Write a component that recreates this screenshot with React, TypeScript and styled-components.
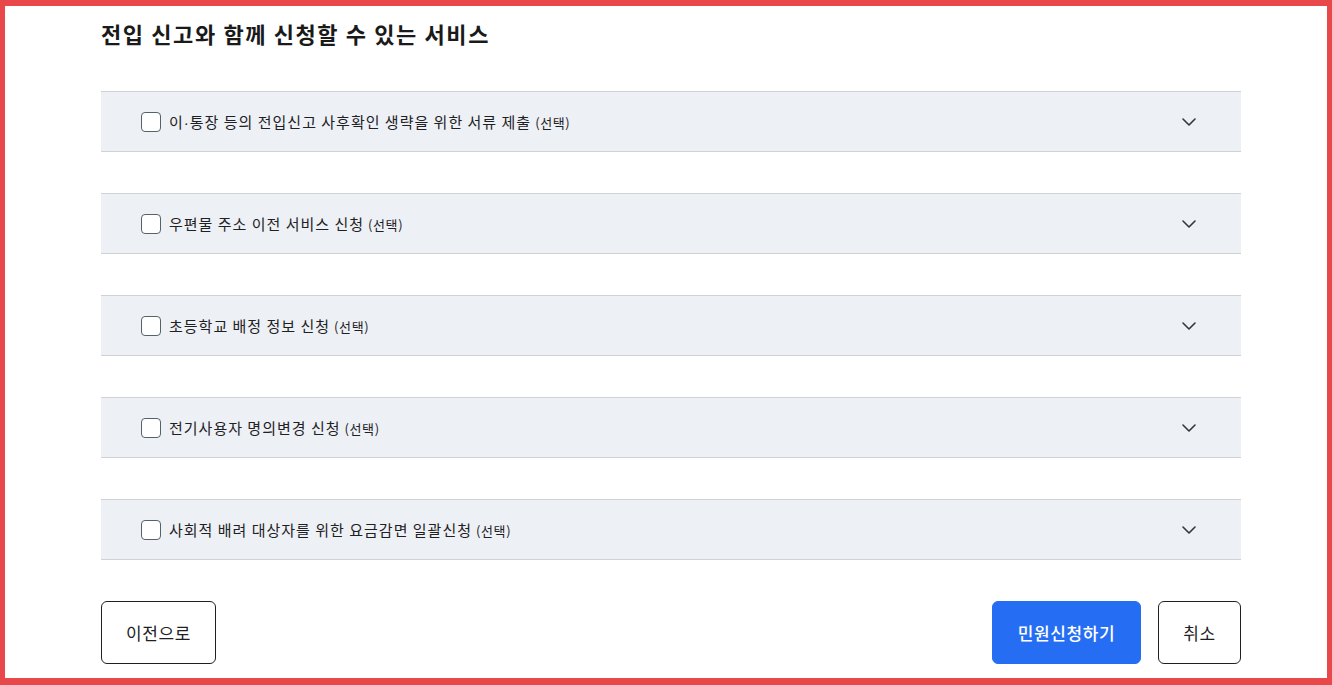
import React, { useState } from "react";
import styled, { createGlobalStyle } from "styled-components";

const GlobalStyle = createGlobalStyle`
  html, body {
    margin: 0;
    padding: 0;
    background: #ffffff;
  }
  body {
    font-family: "Noto Sans CJK KR", "Noto Sans", sans-serif;
    color: #1e2124;
  }
  * {
    box-sizing: border-box;
  }
`;

const Frame = styled.div`
  width: 1332px;
  height: 685px;
  border-style: solid;
  border-color: #e8484a;
  border-width: 6px 5px 7px 5px;
  padding: 11px 86px 14px 96px;
  display: flex;
  flex-direction: column;
  overflow: hidden;
`;

const Title = styled.h2`
  margin: 0 0 42px;
  font-size: 22px;
  line-height: 32px;
  font-weight: 700;
  color: #1a1a1a;
  letter-spacing: 1.6px;
`;

const ServiceList = styled.ul`
  list-style: none;
  margin: 0;
  padding: 0;
  display: flex;
  flex-direction: column;
  gap: 41px;
`;

const ServiceRow = styled.li`
  height: 61px;
  display: flex;
  align-items: center;
  padding: 0 45px 0 40px;
  background: #edf0f4;
  border-top: 1px solid #cfd1d4;
  border-bottom: 1px solid #cfd1d4;
`;

const CheckLabel = styled.label`
  flex: 1;
  display: flex;
  align-items: center;
  gap: 8px;
  cursor: pointer;
  font-size: 15px;
  letter-spacing: 1px;
  color: #1e2124;
`;

const Box = styled.span<{ $checked: boolean }>`
  width: 20px;
  height: 20px;
  border: 1px solid #58616a;
  border-radius: 4px;
  background: ${(p) => (p.$checked ? "#256ef4" : "#ffffff")};
  display: inline-flex;
  align-items: center;
  justify-content: center;
  flex-shrink: 0;
`;

const HiddenInput = styled.input`
  display: none;
`;

const Dot = styled.span`
  font-family: "Liberation Sans", sans-serif;
  letter-spacing: 0;
  margin-right: 1px;
`;

const Optional = styled.span`
  font-size: 13px;
  letter-spacing: 0.6px;
  margin-left: 4px;
  color: #1e2124;
`;

const Chevron = styled.button`
  border: none;
  background: none;
  padding: 0;
  width: 14px;
  height: 14px;
  display: flex;
  align-items: center;
  justify-content: center;
  cursor: pointer;
  color: #33363d;
`;

const Footer = styled.div`
  margin-top: 41px;
  display: flex;
  align-items: center;
  gap: 17px;
`;

const Spacer = styled.div`
  flex: 1;
`;

const Button = styled.button<{ $primary?: boolean; $width: number }>`
  height: 63px;
  width: ${(p) => p.$width}px;
  border-radius: 6px;
  font-family: "Noto Sans CJK KR", "Noto Sans", sans-serif;
  font-size: 17px;
  letter-spacing: 0.6px;
  cursor: pointer;
  border: 1px solid ${(p) => (p.$primary ? "#256ef4" : "#1e2124")};
  background: ${(p) => (p.$primary ? "#256ef4" : "#ffffff")};
  color: ${(p) => (p.$primary ? "#ffffff" : "#1e2124")};
  font-weight: ${(p) => (p.$primary ? 500 : 400)};
`;

const services: React.ReactNode[] = [
  <>
    이<Dot>·</Dot>통장 등의 전입신고 사후확인 생략을 위한 서류 제출
  </>,
  "우편물 주소 이전 서비스 신청",
  "초등학교 배정 정보 신청",
  "전기사용자 명의변경 신청",
  "사회적 배려 대상자를 위한 요금감면 일괄신청",
];

export default function App() {
  const [checked, setChecked] = useState<boolean[]>(services.map(() => false));

  const toggle = (i: number) =>
    setChecked((prev) => prev.map((v, j) => (j === i ? !v : v)));

  return (
    <>
      <GlobalStyle />
      <Frame>
        <Title>전입 신고와 함께 신청할 수 있는 서비스</Title>
        <ServiceList>
          {services.map((name, i) => (
            <ServiceRow key={i}>
              <CheckLabel>
                <HiddenInput
                  type="checkbox"
                  checked={checked[i]}
                  onChange={() => toggle(i)}
                />
                <Box $checked={checked[i]}>
                  {checked[i] && (
                    <svg width="12" height="10" viewBox="0 0 12 10">
                      <path d="M1 5l3.5 3.5L11 1.5" fill="none" stroke="#fff" strokeWidth="2" />
                    </svg>
                  )}
                </Box>
                <span>
                  {name}
                  <Optional>(선택)</Optional>
                </span>
              </CheckLabel>
              <Chevron aria-label="펼치기">
                <svg width="14" height="8" viewBox="0 0 14 8">
                  <path
                    d="M1 1l6 6 6-6"
                    fill="none"
                    stroke="currentColor"
                    strokeWidth="1.6"
                    strokeLinecap="round"
                    strokeLinejoin="round"
                  />
                </svg>
              </Chevron>
            </ServiceRow>
          ))}
        </ServiceList>
        <Footer>
          <Button $width={115}>이전으로</Button>
          <Spacer />
          <Button $primary $width={149}>민원신청하기</Button>
          <Button $width={83}>취소</Button>
        </Footer>
      </Frame>
    </>
  );
}
